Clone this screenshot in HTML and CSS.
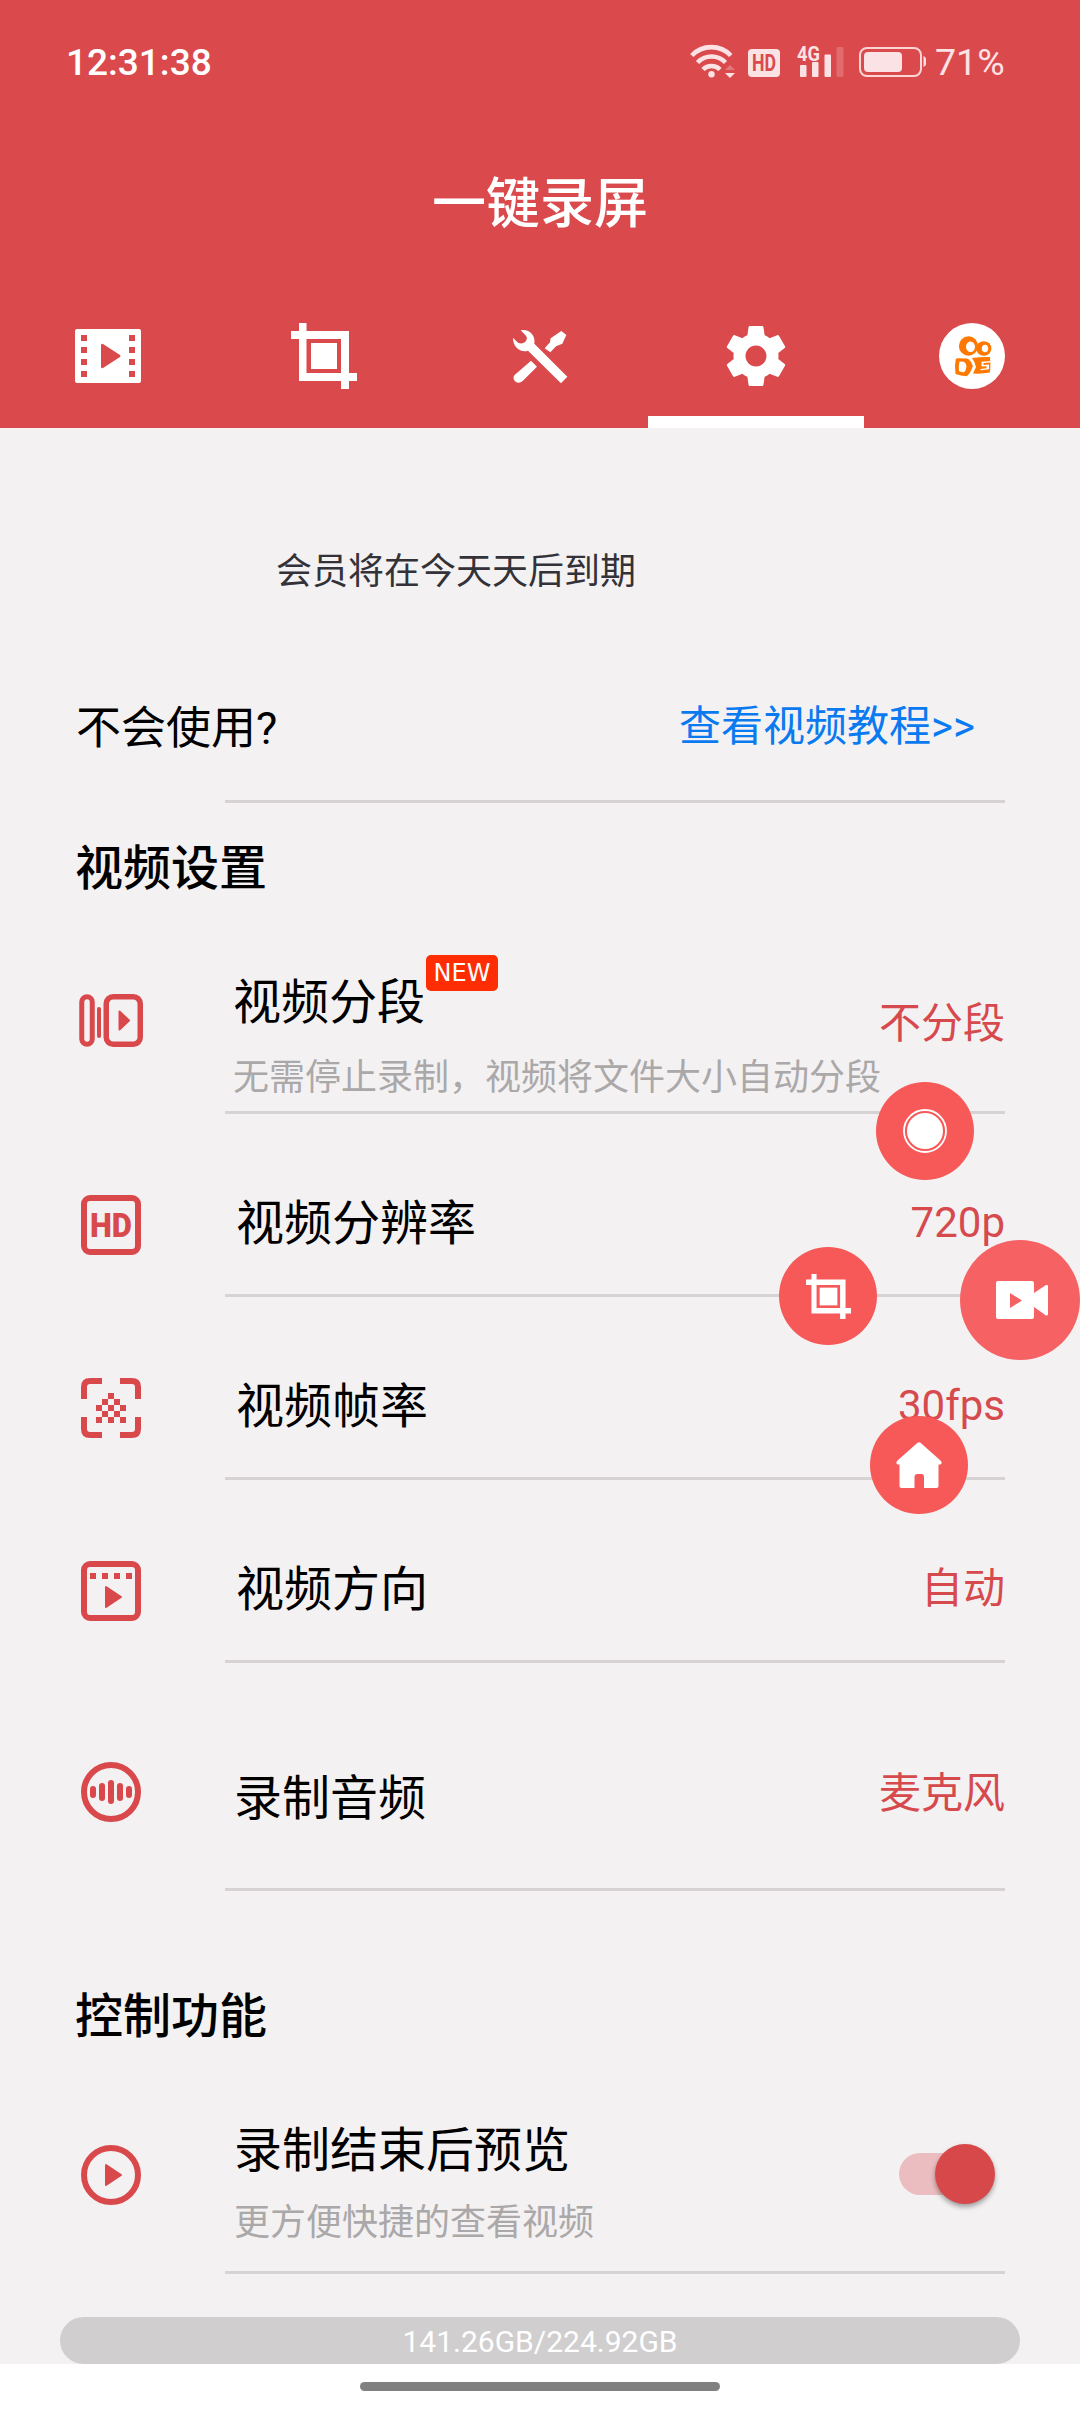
FILE: index.html
```html
<!DOCTYPE html>
<html lang="zh-CN">
<head>
<meta charset="utf-8">
<title>一键录屏</title>
<link rel="stylesheet" href="styles.css">
</head>
<body>
<div class="screen">
  <header class="header">
    <div class="status">
      <span class="clock">12:31:38</span>
      <svg class="status-icons" width="238" height="36" viewBox="689 43 238 36" fill="#fbe2e4">
        <g fill="none" stroke="#fbe2e4" stroke-width="4.600">
          <path d="M691.800 55.500a27 27 0 0 1 39 0M697.500 62.500a19.500 19.500 0 0 1 28 0M703 69.500a12 12 0 0 1 17 0"/>
        </g>
        <circle cx="711.500" cy="74.300" r="3.200"/>
        <path d="M725 70l5-5 5 5z" opacity=".3"/><path d="M725 73h10l-5 5z"/>
        <rect x="748" y="49" width="32" height="28" rx="4"/>
        <text class="hd-mini" x="752" y="71" textLength="24" lengthAdjust="spacingAndGlyphs">HD</text>
        <text class="net" x="797" y="61" textLength="23" lengthAdjust="spacingAndGlyphs">4G</text>
        <rect x="800" y="65" width="6.500" height="12" rx="1"/><rect x="812" y="62" width="6.500" height="15" rx="1"/>
        <rect x="824.500" y="54.500" width="6.500" height="22.500" rx="1"/><rect x="836.500" y="47" width="7" height="30" rx="1" opacity=".22"/>
        <rect x="860" y="48" width="61" height="28" rx="7" fill="none" stroke="#fbd5d4" stroke-width="2"/>
        <rect x="864" y="52" width="38" height="20" rx="4"/><path d="M923.500 56q2.500 1 2.500 3v5q0 2-2.500 3z"/>
      </svg>
      <span class="percent">71%</span>
    </div>
    <h1 class="title">一键录屏</h1>
    <nav class="tabs">
      <a class="tab"><svg width="66" height="54" viewBox="0 0 66 54"><path fill="#fff" fill-rule="evenodd" d="M2 0h62a2 2 0 0 1 2 2v50a2 2 0 0 1-2 2H2a2 2 0 0 1-2-2V2a2 2 0 0 1 2-2zM6 6v6h6V6zM6 18v6h6v-6zM6 30v6h6v-6zM6 42v6h6v-6zM54 6v6h6V6zM54 18v6h6v-6zM54 30v6h6v-6zM54 42v6h6v-6zM26 16v22q.500 2 2 1l17-11q1-1 0-2L28 15q-1.500-1-2 1z"/></svg></a>
      <a class="tab"><svg width="66" height="66" viewBox="0 0 66 66" fill="#fff"><path fill-rule="evenodd" d="M8 0h7.500v8H58v42h8v8h-8v8h-8v-8H8V16H0V8h8zM15.500 16v34H50V16z"/><path d="M20 20h26v26H20z"/></svg></a>
      <a class="tab"><svg width="80" height="90" viewBox="0 0 240 270" fill="#fff"><path d="M62 58C85 52 108 72 103 98l99 99-19 20-99-98C62 126 38 108 39 80l15 15q13 6 22-3 8-9 2-18zM93 149l18 18-43 43q-10 9-20 3-12-9-5-20zM134 112l16-18 2-12 32-22 15 12-12 26-19 8-17 18z"/></svg></a>
      <a class="tab active"><svg width="72" height="72" viewBox="0 0 24 24"><path fill="#fff" d="M19.430 12.980c.040-.320.070-.640.070-.980s-.030-.660-.070-.980l2.110-1.650c.190-.150.240-.420.120-.640l-2-3.460c-.120-.220-.390-.300-.610-.220l-2.490 1c-.520-.400-1.080-.730-1.690-.980l-.380-2.650C14.460 2.180 14.250 2 14 2h-4c-.250 0-.460.180-.490.420l-.380 2.650c-.610.250-1.170.590-1.690.980l-2.490-1c-.230-.090-.490 0-.610.220l-2 3.460c-.130.220-.070.490.120.640l2.110 1.650c-.040.320-.070.650-.070.980s.030.660.070.980l-2.110 1.650c-.190.150-.240.420-.120.640l2 3.460c.120.220.390.300.610.220l2.490-1c.520.400 1.080.730 1.690.980l.380 2.650c.030.240.240.420.490.420h4c.250 0 .460-.180.490-.420l.380-2.650c.610-.250 1.170-.590 1.690-.980l2.490 1c.230.090.490 0 .610-.220l2-3.460c.120-.220.070-.490-.120-.640l-2.110-1.650zM12 15.500c-1.930 0-3.500-1.570-3.500-3.500s1.570-3.500 3.500-3.500 3.500 1.570 3.500 3.500-1.570 3.500-3.500 3.500z"/></svg></a>
      <a class="tab"><svg width="66" height="66" viewBox="0 0 66 66"><circle cx="33" cy="33" r="33" fill="#fff"/><g fill="#ff7800"><ellipse cx="29.500" cy="23" rx="9.600" ry="9.700"/><ellipse cx="44.800" cy="25.500" rx="7.600" ry="7.300"/><path d="M33 35q9-1.200 18-1 .800 8 0 15.500-8 1.500-17 1l3-6.500q-1-5-4-9z"/><path d="M18 35.200l10 .3q4 1.500 5.800 7.500-2 7-6 10.300-6-.3-11.300-2.300-1.300-8 .3-14.800z"/></g><g fill="#fff"><ellipse cx="31.500" cy="23.700" rx="4.500" ry="5.300"/><ellipse cx="46" cy="25.500" rx="3.200" ry="3.800"/><path d="M20.500 38.500l4.500.3q2.500 2 2.500 5-.5 4-2.500 5.700l-5-1.200q-.8-5 .5-9.800z"/><path d="M42.500 38.800l8.500-.8v1.500l-6.500.6v1.900l5.500-.4v4.600l-8.500 1v-1.300l6-.7v-2l-5 .4z"/></g></svg></a>
    </nav>
  </header>

  <main class="content">
    <p class="notice">会员将在今天天后到期</p>
    <div class="help">
      <span class="help-label">不会使用?</span>
      <a class="help-link">查看视频教程&gt;&gt;</a>
    </div>
    <div class="rule"></div>

    <h2 class="section">视频设置</h2>
    <div class="row row-segment">
      <div class="icon"><svg width="64" height="53" viewBox="0 0 64 53" fill="none" stroke="#d9494c" stroke-width="5.500"><rect x="2.750" y="2.750" width="10.500" height="47.500" rx="5.250" stroke-width="5"/><path d="M20 15v27" stroke-width="4" stroke-linecap="round"/><rect x="27.250" y="2.750" width="34" height="47.500" rx="7"/><path fill="#d9494c" stroke-width="2" stroke-linejoin="round" d="M40.500 17.500v18l9.500-9z"/></svg></div>
      <div class="body">
        <div class="texts">
          <div class="name">视频分段<span class="badge">NEW</span></div>
          <div class="desc">无需停止录制，视频将文件大小自动分段</div>
        </div>
        <span class="value">不分段</span>
      </div>
    </div>
    <div class="row">
      <div class="icon"><svg width="60" height="60" viewBox="0 0 60 60"><rect x="3" y="3" width="54" height="54" rx="6" fill="none" stroke="#d9494c" stroke-width="6"/><text class="hd" x="9" y="42" textLength="42" lengthAdjust="spacingAndGlyphs">HD</text></svg></div>
      <div class="body"><div class="name">视频分辨率</div><span class="value">720p</span></div>
    </div>
    <div class="row">
      <div class="icon"><svg width="60" height="60" viewBox="0 0 60 60" fill="#d9494c"><path fill="none" stroke="#d9494c" stroke-width="6" d="M3 21V9q0-6 6-6h12M39 3h12q6 0 6 6v12M57 39v12q0 6-6 6H39M21 57H9q-6 0-6-6V39"/><path d="M27 15h6v6h-6zM21 21h6v6h-6zM33 21h6v6h-6zM15 27h6v6h-6zM27 27h6v6h-6zM39 27h6v6h-6zM21 33h6v6h-6zM33 33h6v6h-6zM15 39h6v6h-6zM27 39h6v6h-6zM39 39h6v6h-6z"/></svg></div>
      <div class="body"><div class="name">视频帧率</div><span class="value">30fps</span></div>
    </div>
    <div class="row">
      <div class="icon"><svg width="60" height="60" viewBox="0 0 60 60" fill="#d9494c"><rect x="3" y="3" width="54" height="54" rx="6" fill="none" stroke="#d9494c" stroke-width="6"/><path d="M9 12h6v6H9zM21 12h6v6h-6zM33 12h6v6h-6zM45 12h6v6h-6z"/><path stroke="#d9494c" stroke-width="2" stroke-linejoin="round" d="M25 26v20l15-10z"/></svg></div>
      <div class="body"><div class="name">视频方向</div><span class="value">自动</span></div>
    </div>
    <div class="row row-audio">
      <div class="icon"><svg width="60" height="60" viewBox="0 0 60 60" fill="none" stroke="#d9494c" stroke-width="6"><circle cx="30" cy="30" r="27"/><path stroke-linecap="round" d="M12 27v6M21 24v12M30 21v18M39 24v12M48 27v6"/></svg></div>
      <div class="body"><div class="name">录制音频</div><span class="value">麦克风</span></div>
    </div>

    <h2 class="section section-control">控制功能</h2>
    <div class="row row-preview">
      <div class="icon"><svg width="60" height="60" viewBox="0 0 60 60"><circle cx="30" cy="30" r="27" fill="none" stroke="#d9494c" stroke-width="6"/><path fill="#d9494c" stroke="#d9494c" stroke-width="2" stroke-linejoin="round" d="M25 20v20l15-10z"/></svg></div>
      <div class="body">
        <div class="texts">
          <div class="name">录制结束后预览</div>
          <div class="desc">更方便快捷的查看视频</div>
        </div>
        <span class="toggle"><span class="thumb"></span></span>
      </div>
    </div>
    <div class="storage">141.26GB/224.92GB</div>
  </main>
  <footer class="gesture"><span class="pill"></span></footer>

  <div class="fab fab-record"><svg width="44" height="44" viewBox="0 0 44 44"><circle cx="22" cy="22" r="21" fill="none" stroke="#fff" stroke-width="1.800"/><circle cx="22" cy="22" r="18" fill="#fff"/></svg></div>
  <div class="fab fab-crop"><svg width="45" height="45" viewBox="0 0 66 66" fill="#fff"><path fill-rule="evenodd" d="M8 0h7.500v8H58v42h8v8h-8v8h-8v-8H8V16H0V8h8zM15.500 16v34H50V16z"/><path d="M20 20h26v26H20z"/></svg></div>
  <div class="fab fab-home"><svg width="46" height="46" viewBox="0 0 46 46"><path fill="#fff" d="M21.500.8q1.500-1.200 3 0L45 19q1.500 2.500-.500 3.500H42.500V44q0 2-2 2H28V35q0-3-2.500-3h-4q-3 0-3 3v11H5.500q-2 0-2-2V22.500H1.500Q-.500 21.500 1 19z"/></svg></div>
  <div class="fab fab-main"><svg width="52" height="38" viewBox="0 0 52 38"><path fill="#fff" fill-rule="evenodd" d="M2 0h34q2 0 2 2v10l12-8q2-.500 2 1v28q0 2-2 1.500L38 26v10q0 2-2 2H2q-2 0-2-2V2q0-2 2-2zM14 12v15l12-7.500z"/></svg></div>
</div>
</body>
</html>
```
FILE: styles.css
```css
* { box-sizing: border-box; }

body {
  margin: 0;
  background: #f4f1f2;
  font-family: Roboto, "Noto Sans CJK SC", sans-serif;
  color: #000;
}

.screen {
  position: relative;
  display: flex;
  flex-direction: column;
  width: 1080px;
  height: 2412px;
  overflow: hidden;
}

h1, h2, p { margin: 0; }

svg { display: block; flex: none; }

/* Header */
.header {
  display: flex;
  flex-direction: column;
  height: 428px;
  background: #da4a4c;
  color: #fff;
}

.status {
  display: flex;
  align-items: center;
  height: 124px;
  padding: 0 75px 0 66px;
}

.clock {
  flex: 1;
  padding-top: 1px;
  font-size: 37px;
  font-weight: 500;
}

.status-icons { margin: -2px 8px 0 0; }

.hd-mini {
  font: 700 23px Roboto, sans-serif;
  fill: #da4a4c;
}

.net { font: 700 21px Roboto, sans-serif; }

.hd {
  font: 900 34px Roboto, sans-serif;
  fill: #d9494c;
}

.percent {
  width: 70px;
  font-size: 37.5px;
  font-weight: 450;
  white-space: nowrap;
  color: #fbe2e4;
}

.title {
  height: 160px;
  font-size: 54px;
  font-weight: 500;
  line-height: 162px;
  text-align: center;
}

.tabs {
  display: grid;
  grid-template-columns: repeat(5, 216px);
  height: 144px;
}

.tab {
  display: flex;
  align-items: center;
  justify-content: center;
}

.tab.active {
  padding-top: 12px;
  border-bottom: 12px solid #fff;
}

/* Settings list */
.content {
  height: 1936px;
}

.notice {
  height: 203px;
  padding: 120px 0 0 276px;
  font-size: 36px;
  line-height: 48px;
  color: #333238;
}

.help {
  display: flex;
  justify-content: space-between;
  height: 169px;
  padding: 66px 105px 0 76px;
}

.help-label {
  font-size: 45px;
  line-height: 64px;
}

.help-link {
  font-size: 42px;
  line-height: 60px;
  color: #0a7af0;
}

.rule {
  height: 3px;
  margin: 0 75px 0 225px;
  background: #d7d3d4;
}

.section {
  height: 128px;
  padding-left: 75px;
  font-size: 48px;
  font-weight: 500;
  line-height: 131px;
}

.section-control {
  height: 200px;
  line-height: 251px;
}

.row {
  display: flex;
  height: 183px;
}

.icon {
  display: flex;
  align-items: center;
  width: 225px;
  padding: 39px 0 0 81px;
}

.body {
  display: flex;
  flex: 1;
  align-items: center;
  justify-content: space-between;
  margin-right: 75px;
  padding: 39px 0 0 11px;
  border-bottom: 3px solid #d7d3d4;
}

.name {
  font-size: 48px;
  line-height: 72px;
  white-space: nowrap;
}

.value {
  flex: none;
  font-size: 42px;
  line-height: 60px;
  color: #d64a4e;
}

.row .value { margin-top: -2px; }

.row-segment .icon { padding: 0 0 4px 79px; }
.row-segment .body { padding: 0 0 0 8px; }
.row-segment .value { margin-top: 6px; }

.texts {
  flex: 1;
  min-width: 0;
  height: 180px;
}

.row-segment .texts { padding-top: 24px; }
.row-segment .name { display: flex; height: 98px; padding-top: 12px; }

.badge {
  width: 72px;
  height: 36px;
  margin: -12px 0 0 1px;
  border-radius: 5px;
  background: #ff2d04;
  color: #fff;
  font: 24px/36px "DejaVu Sans", sans-serif;
  text-align: center;
}

.desc {
  font-size: 36px;
  line-height: 50px;
  white-space: nowrap;
  color: #aaa8a9;
}

.row-audio { height: 228px; }
.row-audio .icon { padding-top: 30px; }
.row-audio .body { padding: 46px 0 0 9px; }
.row-audio .value { margin-top: -9px; }

.row-preview .icon { padding: 0 0 15px 81px; }
.row-preview .body { padding: 0 0 0 9px; }
.row-preview .texts { padding-top: 24px; }
.row-preview .desc { margin-top: 11px; }

.toggle {
  width: 86px;
  height: 42px;
  margin: -14px 20px 0 0;
  padding-left: 36px;
  border-radius: 21px;
  background: #ebbdc0;
}

.thumb {
  display: block;
  width: 60px;
  height: 60px;
  margin-top: -9px;
  border-radius: 50%;
  background: #d7484b;
  box-shadow: 0 3px 5px rgba(0, 0, 0, .35);
}

.storage {
  height: 47px;
  margin: 43px 60px 0;
  border-radius: 24px;
  background: #d0cecf;
  color: #fff;
  font-size: 30px;
  line-height: 49px;
  text-align: center;
}

.gesture {
  display: flex;
  justify-content: center;
  height: 48px;
  padding-top: 18px;
  background: #fff;
}

.pill {
  width: 360px;
  height: 9px;
  border-radius: 5px;
  background: #808080;
}

/* Floating recorder controls drawn over the list */
.fab {
  position: absolute;
  display: flex;
  align-items: center;
  justify-content: center;
  width: 98px;
  height: 98px;
  border-radius: 50%;
  background: #f75858;
}

.fab-record { left: 876px; top: 1082px; }
.fab-crop { left: 779px; top: 1247px; }
.fab-home { left: 870px; top: 1416px; }

.fab-main {
  left: 960px;
  top: 1240px;
  width: 120px;
  height: 120px;
  padding-left: 4px;
  background: #f66164;
}
```
